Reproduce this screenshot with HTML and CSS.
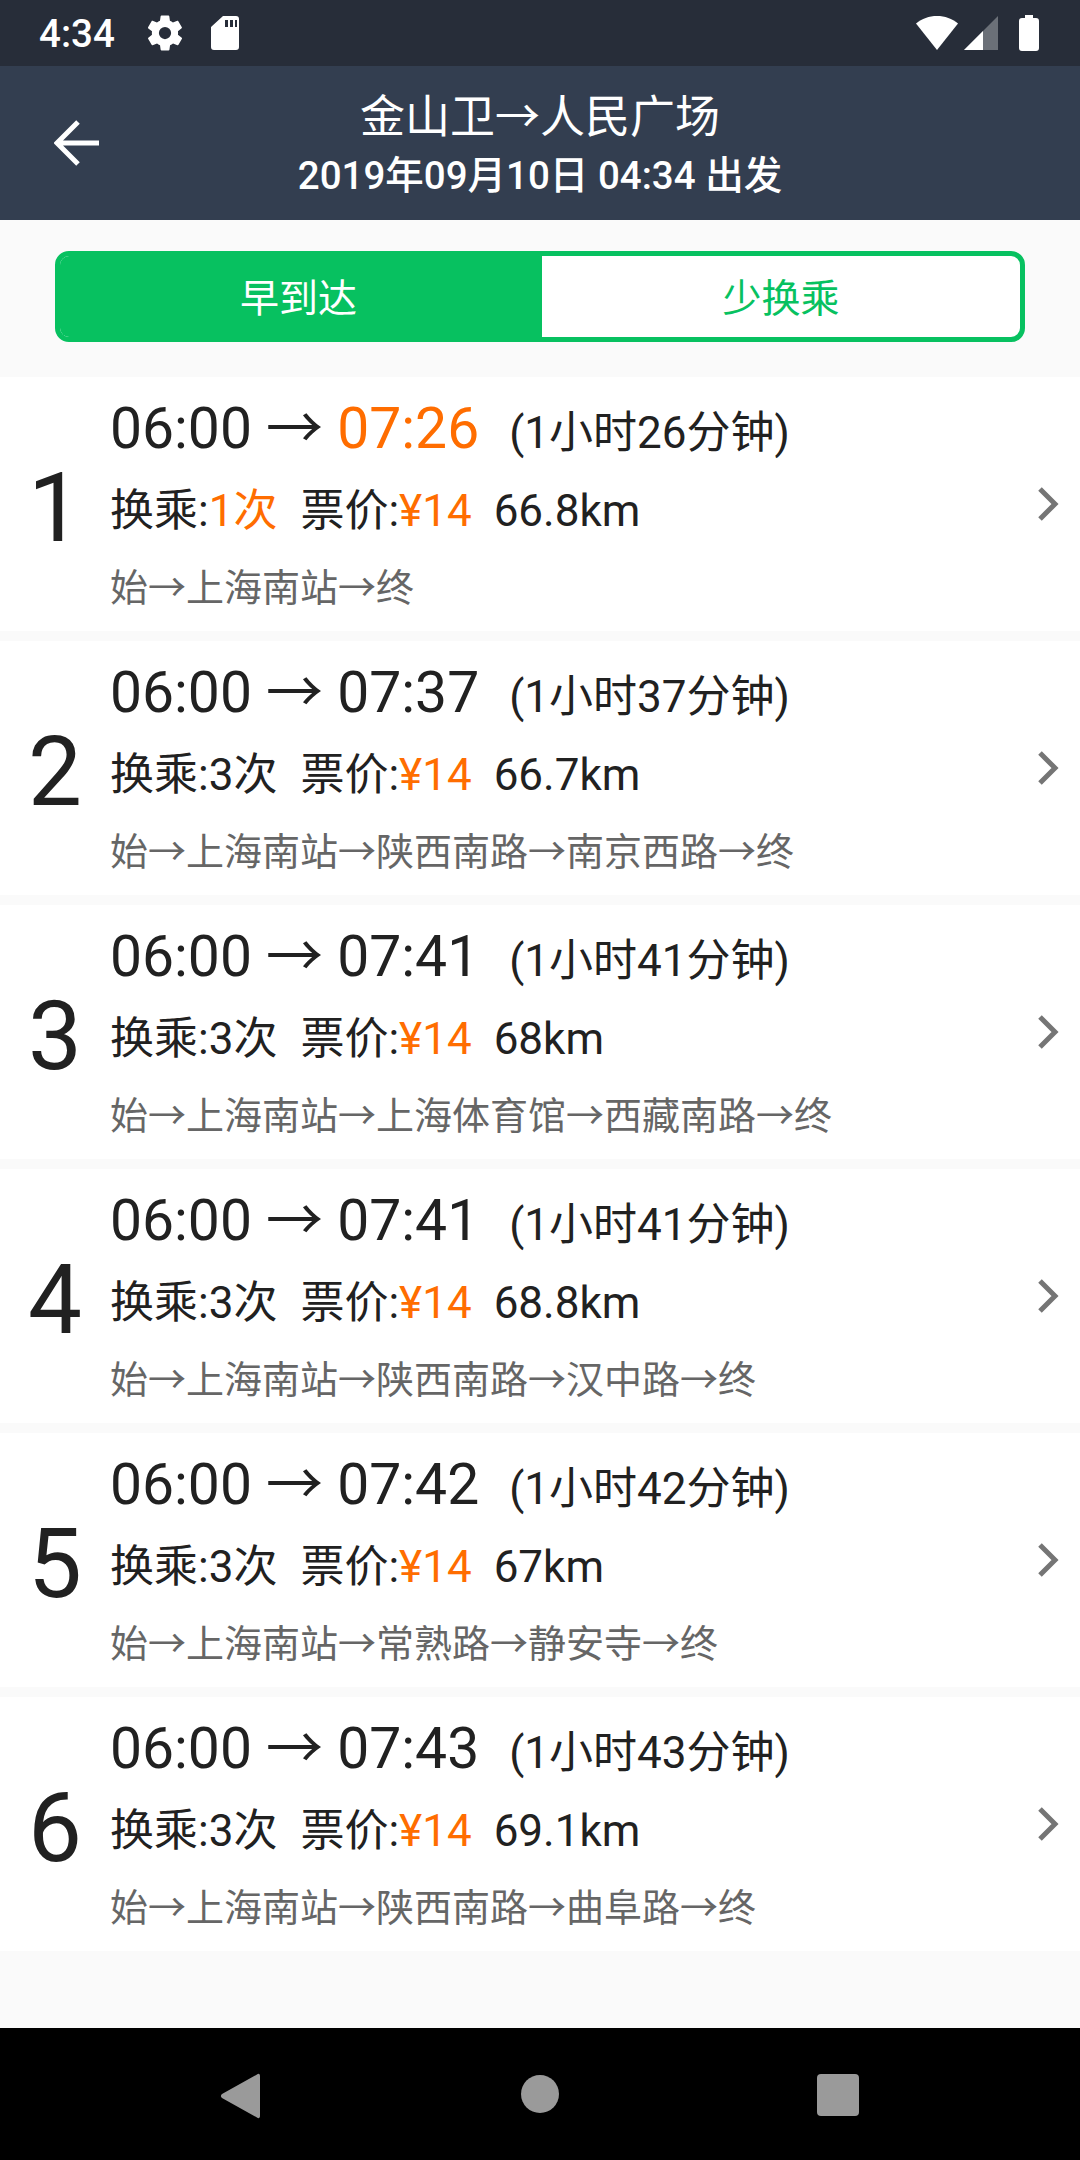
FILE: index.html
```html
<!DOCTYPE html>
<html lang="zh-CN">
<head>
    <meta charset="UTF-8">
    <meta name="viewport" content="width=device-width, initial-scale=1.0">
    <title>金山卫→人民广场</title>
    <link rel="stylesheet" href="styles.css">
</head>
<body>
    <div class="status-bar">
        <span class="clock">4:34</span>
        <svg class="icon-gear" viewBox="0 0 24 24"><path fill="#fff" d="M19.4 13c.04-.32.07-.66.07-1s-.03-.68-.07-1l2.1-1.65c.2-.15.25-.42.12-.64l-2-3.46c-.12-.22-.38-.3-.6-.22l-2.5 1c-.52-.4-1.08-.73-1.7-.98l-.37-2.65A.49.49 0 0 0 14 2h-4c-.25 0-.46.18-.5.42l-.37 2.65c-.62.25-1.18.59-1.7.98l-2.5-1c-.22-.08-.48 0-.6.22l-2 3.46c-.13.22-.07.49.12.64L4.57 11c-.04.32-.07.66-.07 1s.03.68.07 1l-2.1 1.65c-.2.15-.25.42-.12.64l2 3.46c.12.22.38.3.6.22l2.5-1c.52.4 1.08.73 1.7.98l.37 2.65c.04.24.25.42.5.42h4c.25 0 .46-.18.5-.42l.37-2.65c.62-.25 1.18-.59 1.7-.98l2.5 1c.22.08.48 0 .6-.22l2-3.46c.13-.22.07-.49-.12-.64L19.4 13zM12 15.500a3.500 3.500 0 1 1 0-7 3.500 3.500 0 0 1 0 7z"/></svg>
        <svg class="icon-sd" viewBox="0 0 28 34"><path fill="#fff" fill-rule="evenodd" d="M12 0h13a3 3 0 0 1 3 3v28a3 3 0 0 1-3 3H3a3 3 0 0 1-3-3V11zM14 4v7h3V4zM19 4v7h3V4zM24 4v7h2V4z"/></svg>
        <span class="spacer"></span>
        <svg class="icon-wifi" viewBox="0 0 44 34"><path fill="#fff" d="M22 0c8 0 15 2.600 21 7.500L22 34 1 7.500C7 2.600 14 0 22 0z"/></svg>
        <svg class="icon-signal" viewBox="0 0 34 34"><path fill="#6b7078" d="M34 0v34H0z"/><path fill="#fff" d="M19 15v19H0z"/></svg>
        <svg class="icon-battery" viewBox="0 0 20 36"><path fill="#fff" d="M6 0h8v3h3a3 3 0 0 1 3 3v27a3 3 0 0 1-3 3H3a3 3 0 0 1-3-3V6a3 3 0 0 1 3-3h3z"/></svg>
    </div>

    <div class="header">
        <svg class="back" viewBox="0 0 46 46"><path fill="none" stroke="#fff" stroke-width="5" d="M45 23H4M24 2 3 23l21 21"/></svg>
        <div class="header-title">
            <div class="route">金山卫→人民广场</div>
            <div class="depart">2019年09月10日 04:34 出发</div>
        </div>
    </div>

    <div class="main">
        <div class="segment">
            <div class="seg-item active">早到达</div>
            <div class="seg-item">少换乘</div>
        </div>

        <div class="plan-list">
            <div class="plan">
                <div class="num">1</div>
                <div class="info">
                    <div class="times">06:00 → <span class="hl">07:26</span><span class="dur">(1小时26分钟)</span></div>
                    <div class="meta">换乘:<span class="hl">1次</span><span class="gap">票价:<span class="hl">¥14</span></span><span class="gap-km">66.8km</span></div>
                    <div class="stops">始→上海南站→终</div>
                </div>
                <svg class="chev" viewBox="0 0 24 36"><path fill="none" stroke="#757575" stroke-width="5" d="M3 3l15 15L3 33"/></svg>
            </div>
            <div class="plan">
                <div class="num">2</div>
                <div class="info">
                    <div class="times">06:00 → 07:37<span class="dur">(1小时37分钟)</span></div>
                    <div class="meta">换乘:3次<span class="gap">票价:<span class="hl">¥14</span></span><span class="gap-km">66.7km</span></div>
                    <div class="stops">始→上海南站→陕西南路→南京西路→终</div>
                </div>
                <svg class="chev" viewBox="0 0 24 36"><path fill="none" stroke="#757575" stroke-width="5" d="M3 3l15 15L3 33"/></svg>
            </div>
            <div class="plan">
                <div class="num">3</div>
                <div class="info">
                    <div class="times">06:00 → 07:41<span class="dur">(1小时41分钟)</span></div>
                    <div class="meta">换乘:3次<span class="gap">票价:<span class="hl">¥14</span></span><span class="gap-km">68km</span></div>
                    <div class="stops">始→上海南站→上海体育馆→西藏南路→终</div>
                </div>
                <svg class="chev" viewBox="0 0 24 36"><path fill="none" stroke="#757575" stroke-width="5" d="M3 3l15 15L3 33"/></svg>
            </div>
            <div class="plan">
                <div class="num">4</div>
                <div class="info">
                    <div class="times">06:00 → 07:41<span class="dur">(1小时41分钟)</span></div>
                    <div class="meta">换乘:3次<span class="gap">票价:<span class="hl">¥14</span></span><span class="gap-km">68.8km</span></div>
                    <div class="stops">始→上海南站→陕西南路→汉中路→终</div>
                </div>
                <svg class="chev" viewBox="0 0 24 36"><path fill="none" stroke="#757575" stroke-width="5" d="M3 3l15 15L3 33"/></svg>
            </div>
            <div class="plan">
                <div class="num">5</div>
                <div class="info">
                    <div class="times">06:00 → 07:42<span class="dur">(1小时42分钟)</span></div>
                    <div class="meta">换乘:3次<span class="gap">票价:<span class="hl">¥14</span></span><span class="gap-km">67km</span></div>
                    <div class="stops">始→上海南站→常熟路→静安寺→终</div>
                </div>
                <svg class="chev" viewBox="0 0 24 36"><path fill="none" stroke="#757575" stroke-width="5" d="M3 3l15 15L3 33"/></svg>
            </div>
            <div class="plan">
                <div class="num">6</div>
                <div class="info">
                    <div class="times">06:00 → 07:43<span class="dur">(1小时43分钟)</span></div>
                    <div class="meta">换乘:3次<span class="gap">票价:<span class="hl">¥14</span></span><span class="gap-km">69.1km</span></div>
                    <div class="stops">始→上海南站→陕西南路→曲阜路→终</div>
                </div>
                <svg class="chev" viewBox="0 0 24 36"><path fill="none" stroke="#757575" stroke-width="5" d="M3 3l15 15L3 33"/></svg>
            </div>
        </div>
    </div>

    <div class="nav-bar">
        <svg class="nav-back" viewBox="0 0 40 46"><path fill="#9a9a9a" d="M37 1.500c1.500-1.500 3-.5 3 1.500v40c0 2-1.500 3-3 1.500L2 25c-1.500-1.200-1.500-2.800 0-4z"/></svg>
        <div class="nav-home"></div>
        <div class="nav-recent"></div>
    </div>
</body>
</html>
```

FILE: styles.css
```css
* {
    box-sizing: border-box;
}
html, body {
    margin: 0;
    padding: 0;
}
body {
    width: 1080px;
    height: 2160px;
    display: flex;
    flex-direction: column;
    font-family: Roboto, "Noto Sans CJK SC", sans-serif;
    background-color: #fafafa;
    color: #212121;
}

/* status bar */
.status-bar {
    height: 66px;
    display: flex;
    align-items: center;
    padding: 0 41px 0 39px;
    background-color: #272d39;
    color: #fff;
}
.clock {
    font-size: 38.5px;
    font-weight: 500;
}
.icon-gear {
    width: 42px;
    height: 42px;
    margin-left: 29px;
}
.icon-sd {
    width: 28px;
    height: 34px;
    margin-left: 25px;
}
.spacer {
    flex: 1;
}
.icon-wifi {
    width: 44px;
    height: 34px;
}
.icon-signal {
    width: 34px;
    height: 34px;
    margin-left: 5px;
}
.icon-battery {
    width: 20px;
    height: 36px;
    margin-left: 21px;
}

/* header */
.header {
    height: 154px;
    position: relative;
    display: flex;
    align-items: center;
    justify-content: center;
    background-color: #333e50;
    color: #fff;
}
.back {
    position: absolute;
    left: 54px;
    top: 54px;
    width: 46px;
    height: 46px;
}
.header-title {
    text-align: center;
    padding-top: 3px;
}
.route {
    font-size: 45px;
    line-height: 62px;
}
.depart {
    font-size: 38.5px;
    font-weight: 500;
    line-height: 54px;
}

/* tabs */
.main {
    flex: 1;
    padding-top: 31px;
}
.segment {
    width: 970px;
    height: 91px;
    margin: 0 auto 35px;
    display: flex;
    border: 5px solid #07c160;
    border-radius: 14px;
    overflow: hidden;
    background: #fff;
}
.seg-item {
    flex: 1;
    display: flex;
    align-items: center;
    justify-content: center;
    padding-bottom: 3px;
    font-size: 39px;
    color: #07c160;
}
.seg-item.active {
    flex: 0 0 482px;
    padding-right: 5px;
    background-color: #07c160;
    color: #fff;
}

/* plans */
.plan-list {
    display: flex;
    flex-direction: column;
    gap: 10px;
}
.plan {
    height: 254px;
    display: flex;
    align-items: center;
    background: #fff;
}
.num {
    width: 110px;
    padding: 8px 0 0 28px;
    font-size: 96px;
    line-height: 1;
    color: #212121;
}
.info {
    flex: 1;
    padding-top: 8px;
}
.times {
    font-size: 57px;
    line-height: 76px;
}
.dur {
    margin-left: 30px;
    font-size: 44px;
}
.meta {
    font-size: 44px;
    line-height: 80px;
}
.gap {
    margin-left: 23px;
}
.gap-km {
    margin-left: 22px;
}
.stops {
    font-size: 38px;
    line-height: 74px;
    color: #666;
}
.hl {
    color: #ff6d00;
}
.chev {
    width: 24px;
    height: 36px;
    margin-right: 19px;
}

/* nav bar */
.nav-bar {
    height: 132px;
    position: relative;
    background-color: #000;
}
.nav-back {
    position: absolute;
    left: 220px;
    top: 45px;
    width: 40px;
    height: 46px;
}
.nav-home {
    position: absolute;
    left: 521px;
    top: 47px;
    width: 38px;
    height: 38px;
    border-radius: 50%;
    background-color: #9a9a9a;
}
.nav-recent {
    position: absolute;
    left: 817px;
    top: 46px;
    width: 42px;
    height: 42px;
    border-radius: 4px;
    background-color: #9a9a9a;
}
```
